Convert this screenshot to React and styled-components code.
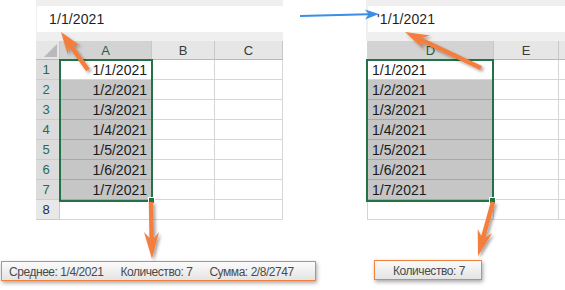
import React from "react";
import styled, { createGlobalStyle } from "styled-components";

const Global = createGlobalStyle`
  html, body { margin: 0; padding: 0; background: #ffffff; }
  body { font-family: "Liberation Sans", Arial, sans-serif; }
`;

const Page = styled.div`
  position: relative;
  width: 565px;
  height: 290px;
  overflow: hidden;
  background: #ffffff;
`;

const TopRow = styled.div`
  display: flex;
  align-items: flex-start;
`;

const Panel = styled.div`
  margin-left: ${(p) => p.$left}px;
  width: ${(p) => p.$width}px;
  flex: none;
`;

const FormulaBar = styled.div`
  height: 41px;
  box-sizing: border-box;
  background: #efefef;
  padding: 6px 0 0 ${(p) => p.$pad}px;
  margin-left: ${(p) => p.$shift || 0}px;
`;

const FormulaInput = styled.div`
  height: 26px;
  background: #ffffff;
  display: flex;
  align-items: center;
  padding-left: ${(p) => p.$indent}px;
  font-size: 14px;
  color: #1f1f1f;
  letter-spacing: 0.1px;
`;

const SheetWrap = styled.div`
  position: relative;
`;

const Grid = styled.div`
  display: grid;
  grid-template-columns: ${(p) => p.$cols};
  grid-template-rows: 19px repeat(8, 20px);
  ${(p) => (p.$leftLine ? "border-left: 1px solid #d4d4d4;" : "")}
`;

const Cell = styled.div`
  box-sizing: border-box;
  border-right: 1px solid #d6d6d6;
  border-bottom: 1px solid ${(p) => (p.$sel ? "#a8a8a8" : "#d6d6d6")};
  background: ${(p) => (p.$sel ? "#c6c6c6" : "#ffffff")};
  display: flex;
  align-items: center;
  justify-content: ${(p) => (p.$right ? "flex-end" : "flex-start")};
  padding: 1px 4px 0 4px;
  font-size: 14px;
  color: #1a1a1a;
  white-space: nowrap;
  overflow: hidden;
`;

const ColHead = styled.div`
  box-sizing: border-box;
  border-right: 1px solid #c8c8c8;
  border-bottom: 1px solid #b8b8b8;
  background: ${(p) => (p.$sel ? "#d3d3d3" : "#e6e6e6")};
  display: flex;
  align-items: center;
  justify-content: center;
  font-size: 13px;
  color: ${(p) => (p.$sel ? "#2b5d43" : "#3a3a3a")};
`;

const RowHead = styled.div`
  box-sizing: border-box;
  border-right: 1px solid #c8c8c8;
  border-bottom: 1px solid #cccccc;
  background: ${(p) => (p.$sel ? "#dcdcdc" : "#e8e8e8")};
  display: flex;
  align-items: center;
  justify-content: center;
  font-size: 13px;
  padding-right: 3px;
  color: ${(p) => (p.$sel ? "#276a55" : "#1f2a44")};
`;

const Corner = styled.div`
  box-sizing: border-box;
  border-right: 1px solid #c8c8c8;
  border-bottom: 1px solid #b8b8b8;
  background: #e6e6e6;
  position: relative;
  &::after {
    content: "";
    position: absolute;
    right: 2px;
    bottom: 2px;
    width: 0;
    height: 0;
    border-left: 13px solid transparent;
    border-bottom: 13px solid #b9b9b9;
  }
`;

const Selection = styled.div`
  position: absolute;
  left: ${(p) => p.$x}px;
  top: 18px;
  width: ${(p) => p.$w}px;
  height: 143px;
  box-sizing: border-box;
  border: 2px solid #217346;
  pointer-events: none;
`;

const FillHandle = styled.div`
  position: absolute;
  right: -4px;
  bottom: -4px;
  width: 5px;
  height: 5px;
  background: #217346;
  border: 1px solid #ffffff;
`;

const StatusRow = styled.div`
  display: flex;
  align-items: flex-start;
  margin-top: 41px;
`;

const StatusBar = styled.div`
  margin-left: ${(p) => p.$left}px;
  width: ${(p) => p.$width}px;
  margin-top: ${(p) => p.$top || 0}px;
  height: 20px;
  box-sizing: border-box;
  border: 1.5px solid #f2803f;
  background: linear-gradient(#fbfbfb, #e4e4e4);
  box-shadow: 1px 2px 4px rgba(0, 0, 0, 0.35);
  display: flex;
  align-items: center;
  justify-content: ${(p) => (p.$center ? "center" : "flex-start")};
  gap: 17px;
  padding-left: ${(p) => (p.$center ? 2 : 7)}px;
  padding-top: 1px;
  font-size: 12px;
  letter-spacing: -0.45px;
  color: #4a4a4a;
  white-space: nowrap;
`;

const Overlay = styled.svg`
  position: absolute;
  left: 0;
  top: 0;
  pointer-events: none;
`;

function arrowPts(x1, y1, x2, y2, shaft, headLen, headW, notch) {
  const dx = x2 - x1;
  const dy = y2 - y1;
  const L = Math.hypot(dx, dy);
  const ux = dx / L;
  const uy = dy / L;
  const nx = -uy;
  const ny = ux;
  const bx = x2 - ux * headLen;
  const by = y2 - uy * headLen;
  const kx = x2 - ux * (headLen - notch);
  const ky = y2 - uy * (headLen - notch);
  const s = shaft / 2;
  const h = headW / 2;
  const pts = [
    [x1 + nx * s, y1 + ny * s],
    [kx + nx * s, ky + ny * s],
    [bx + nx * h, by + ny * h],
    [x2, y2],
    [bx - nx * h, by - ny * h],
    [kx - nx * s, ky - ny * s],
    [x1 - nx * s, y1 - ny * s],
  ];
  return pts.map((p) => p.map((v) => v.toFixed(1)).join(",")).join(" ");
}

const dates = ["1/1/2021", "1/2/2021", "1/3/2021", "1/4/2021", "1/5/2021", "1/6/2021", "1/7/2021"];

function LeftSheet() {
  return (
    <SheetWrap>
      <Grid $cols="24px 92px 63px 68px">
        <Corner />
        <ColHead $sel>A</ColHead>
        <ColHead>B</ColHead>
        <ColHead>C</ColHead>
        {Array.from({ length: 8 }).map((_, i) => (
          <React.Fragment key={i}>
            <RowHead $sel={i < 7}>{i + 1}</RowHead>
            <Cell $right $sel={i > 0 && i < 7}>{i < 7 ? dates[i] : ""}</Cell>
            <Cell />
            <Cell />
          </React.Fragment>
        ))}
      </Grid>
      <Selection $x={23} $w={94}>
        <FillHandle />
      </Selection>
    </SheetWrap>
  );
}

function RightSheet() {
  return (
    <SheetWrap>
      <Grid $cols="126px 65px 7px" $leftLine>
        <ColHead $sel>D</ColHead>
        <ColHead>E</ColHead>
        <ColHead />
        {Array.from({ length: 8 }).map((_, i) => (
          <React.Fragment key={i}>
            <Cell $sel={i > 0 && i < 7}>{i < 7 ? dates[i] : ""}</Cell>
            <Cell />
            <Cell />
          </React.Fragment>
        ))}
      </Grid>
      <Selection $x={-1} $w={128}>
        <FillHandle />
      </Selection>
    </SheetWrap>
  );
}

export default function App() {
  const orange = "#f47e3c";
  return (
    <Page>
      <Global />
      <TopRow>
        <Panel $left={36} $width={247}>
          <FormulaBar $pad={1}>
            <FormulaInput $indent={12}>1/1/2021</FormulaInput>
          </FormulaBar>
          <LeftSheet />
        </Panel>
        <Panel $left={84} $width={198}>
          <FormulaBar $pad={2} $shift={-1}>
            <FormulaInput $indent={9}>'1/1/2021</FormulaInput>
          </FormulaBar>
          <RightSheet />
        </Panel>
      </TopRow>
      <StatusRow>
        <StatusBar $left={1} $width={315}>
          <span>Среднее: 1/4/2021</span>
          <span>Количество: 7</span>
          <span>Сумма: 2/8/2747</span>
        </StatusBar>
        <StatusBar $left={58} $width={108} $top={-1} $center>
          <span>Количество: 7</span>
        </StatusBar>
      </StatusRow>
      <Overlay width="565" height="290" viewBox="0 0 565 290">
        <defs>
          <filter id="sh" x="-30%" y="-30%" width="160%" height="160%">
            <feDropShadow dx="2" dy="2" stdDeviation="1.6" floodColor="#000" floodOpacity="0.35" />
          </filter>
        </defs>
        <g fill={orange} filter="url(#sh)">
          <polygon points={arrowPts(88, 70, 61, 32, 4.5, 22, 15, 5)} />
          <polygon points={arrowPts(151, 202, 152, 259, 4.5, 27, 15, 6)} />
          <polygon points={arrowPts(493, 202, 478, 256, 4.5, 26, 15, 6)} />
          <polygon points={arrowPts(481, 68, 405, 32, 4.5, 24, 15, 6)} />
        </g>
        <g fill="#3b8de6">
          <polygon points={arrowPts(300, 16, 379, 14, 2, 14, 10, 3)} />
        </g>
      </Overlay>
    </Page>
  );
}
